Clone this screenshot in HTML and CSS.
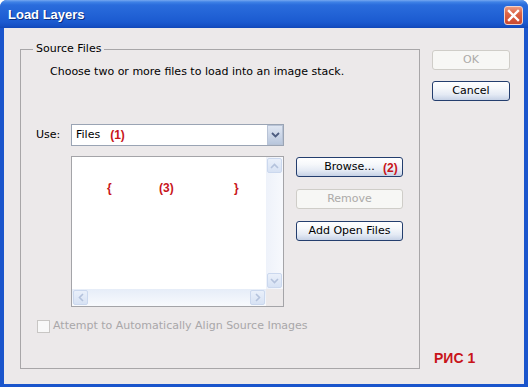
FILE: index.html
```html
<!DOCTYPE html>
<html>
<head>
<meta charset="utf-8">
<link rel="stylesheet" href="styles.css">
</head>
<body>
<div class="window">
  <div class="titlebar">
    <span class="title">Load Layers</span>
    <span class="close-btn">
      <svg width="13" height="13" viewBox="0 0 13 13"><path d="M2 2 L11 11 M11 2 L2 11" stroke="#fff" stroke-width="2.4" stroke-linecap="square"/></svg>
    </span>
  </div>
  <div class="client">
    <fieldset class="group">
      <legend class="group-title">Source Files</legend>
      <p class="hint">Choose two or more files to load into an image stack.</p>
      <div class="use-row">
        <span class="use-label">Use:</span>
        <div class="select">
          <span class="select-value">Files</span>
          <span class="mark mark-1">(1)</span>
          <span class="select-arrow">
            <svg width="9" height="6" viewBox="0 0 9 6"><path d="M1 1 L4.5 4.5 L8 1" fill="none" stroke="#4d5d80" stroke-width="1.8"/></svg>
          </span>
        </div>
      </div>
      <div class="files-row">
        <div class="listbox">
          <div class="list-top">
            <div class="list-content">
              <span class="mark brace-l">{</span>
              <span class="mark mark-3">(3)</span>
              <span class="mark brace-r">}</span>
            </div>
            <div class="vscroll">
              <span class="sbtn">
                <svg width="9" height="6" viewBox="0 0 9 6"><path d="M1 5 L4.5 1.5 L8 5" fill="none" stroke="#b4c2dc" stroke-width="1.6"/></svg>
              </span>
              <span class="vtrack"></span>
              <span class="sbtn">
                <svg width="9" height="6" viewBox="0 0 9 6"><path d="M1 1 L4.5 4.5 L8 1" fill="none" stroke="#b4c2dc" stroke-width="1.6"/></svg>
              </span>
            </div>
          </div>
          <div class="list-bottom">
            <div class="hscroll">
              <span class="sbtn">
                <svg width="6" height="9" viewBox="0 0 6 9"><path d="M5 1 L1.5 4.5 L5 8" fill="none" stroke="#b4c2dc" stroke-width="1.6"/></svg>
              </span>
              <span class="htrack"></span>
              <span class="sbtn">
                <svg width="6" height="9" viewBox="0 0 6 9"><path d="M1 1 L4.5 4.5 L1 8" fill="none" stroke="#b4c2dc" stroke-width="1.6"/></svg>
              </span>
            </div>
            <span class="corner"></span>
          </div>
        </div>
        <div class="side-buttons">
          <span class="btn btn-browse">Browse...<span class="mark mark-2">(2)</span></span>
          <span class="btn btn-disabled">Remove</span>
          <span class="btn">Add Open Files</span>
        </div>
      </div>
      <div class="check-row">
        <span class="checkbox"></span>
        <span class="check-label">Attempt to Automatically Align Source Images</span>
      </div>
    </fieldset>
    <div class="dialog-buttons">
      <span class="btn btn-disabled btn-dialog">OK</span>
      <span class="btn btn-dialog">Cancel</span>
      <span class="caption">РИС 1</span>
    </div>
  </div>
</div>
</body>
</html>
```

FILE: styles.css
```css
html, body {
  margin: 0;
  padding: 0;
  background: #ffffff;
}

body {
  font-family: "DejaVu Sans", Tahoma, sans-serif;
  font-size: 11px;
  color: #000;
}

.window {
  width: 528px;
  height: 387px;
  box-sizing: border-box;
  display: flex;
  flex-direction: column;
  background: #1a55cc;
  border-radius: 7px 7px 0 0;
  overflow: hidden;
}

.titlebar {
  height: 28px;
  flex: none;
  display: flex;
  align-items: center;
  justify-content: space-between;
  padding: 0 5px 0 8px;
  background: linear-gradient(to bottom, #76a8f0 0px, #3f82e6 2px, #2a6cdc 5px, #2263d6 14px, #1b5ad0 22px, #1550c4 26px, #1147b8 28px);
}

.title {
  font-family: "Liberation Sans", Arial, sans-serif;
  font-weight: bold;
  font-size: 13px;
  color: #fff;
  text-shadow: 1px 1px 0 #0a2e80;
  letter-spacing: 0;
}

.close-btn {
  width: 19px;
  height: 19px;
  box-sizing: border-box;
  border: 1px solid #f3d2c8;
  border-radius: 3px;
  background: linear-gradient(to bottom, #ec9a82 0%, #dd6748 35%, #d4553a 70%, #c94a30 100%);
  display: flex;
  align-items: center;
  justify-content: center;
  margin-top: 2px;
}

.client {
  flex: 1;
  margin: 0 4px 3px 4px;
  background: #ece9ea;
  display: flex;
  align-items: flex-start;
  padding: 0 14px 0 16px;
  gap: 12px;
}

.group {
  margin: 14px 0 0 0;
  padding: 0;
  width: 401px;
  height: 327px;
  box-sizing: border-box;
  border: 1px solid #a8a6a8;
  display: flex;
  flex-direction: column;
  align-items: flex-start;
}

.group-title {
  margin-left: 12px;
  padding: 0 3px;
  line-height: 14px;
}

.hint {
  margin: 9px 0 0 29px;
  line-height: 14px;
}

.use-row {
  margin: 45px 0 0 15px;
  display: flex;
  align-items: center;
}

.use-label {
  width: 35px;
  line-height: 14px;
}

.select {
  width: 213px;
  height: 22px;
  box-sizing: border-box;
  border: 1px solid #9aa4b4;
  background: #fff;
  display: flex;
  align-items: center;
  padding-left: 4px;
}

.select-value {
  line-height: 14px;
}

.mark {
  font-family: "Liberation Sans", Arial, sans-serif;
  font-weight: bold;
  font-size: 12px;
  color: #c8141a;
  line-height: 14px;
}

.mark-1 {
  margin-left: 10px;
}

.select-arrow {
  margin-left: auto;
  width: 16px;
  height: 20px;
  box-sizing: border-box;
  border: 1px solid #b8c3d6;
  background: linear-gradient(to bottom, #dfe6f2 0%, #c9d4e6 60%, #b8c6dc 100%);
  display: flex;
  align-items: center;
  justify-content: center;
}

.files-row {
  margin: 10px 0 0 50px;
  display: flex;
  align-items: flex-start;
  gap: 12px;
}

.listbox {
  width: 213px;
  height: 151px;
  box-sizing: border-box;
  border: 1px solid #a4a4a8;
  background: #fff;
  display: flex;
  flex-direction: column;
}

.list-top {
  flex: 1;
  display: flex;
}

.list-content {
  flex: 1;
  position: relative;
}

.list-content .mark {
  position: absolute;
  top: 24px;
}

.brace-l { left: 35px; }
.mark-3 { left: 87px; }
.brace-r { left: 162px; }

.vscroll {
  width: 17px;
  display: flex;
  flex-direction: column;
  background: linear-gradient(to right, #eef2fa, #f7f9fd);
}

.vtrack {
  flex: 1;
}

.sbtn {
  width: 15px;
  height: 15px;
  margin: 0 1px;
  box-sizing: border-box;
  border: 1px solid #cbd8ee;
  border-radius: 2px;
  background: linear-gradient(to bottom, #eaf0fa, #d7e2f4);
  display: flex;
  align-items: center;
  justify-content: center;
  flex: none;
}

.vscroll .sbtn {
  margin: 1px 1px;
}

.list-bottom {
  height: 17px;
  display: flex;
}

.hscroll {
  flex: 1;
  display: flex;
  align-items: center;
  background: linear-gradient(to bottom, #e6edf8, #f8fafd);
}

.hscroll .sbtn {
  margin: 0 1px;
}

.htrack {
  flex: 1;
}

.corner {
  width: 17px;
  background: #ece9ea;
}

.side-buttons {
  margin-top: 1px;
  display: flex;
  flex-direction: column;
  gap: 12px;
}

.btn {
  width: 107px;
  height: 20px;
  box-sizing: border-box;
  border: 1px solid #243e6e;
  border-radius: 3px;
  background: linear-gradient(to bottom, #ffffff 0%, #f6f8fb 35%, #e4eaf4 70%, #c6d2e6 100%);
  display: flex;
  align-items: center;
  justify-content: center;
  line-height: 14px;
  position: relative;
}

.btn-disabled {
  border-color: #cfcdc8;
  background: #f7f7f5;
  color: #acaaa8;
}

.mark-2 {
  position: absolute;
  left: 86px;
  top: 3px;
}

.check-row {
  margin: 12px 0 0 16px;
  display: flex;
  align-items: center;
  gap: 3px;
}

.checkbox {
  width: 13px;
  height: 13px;
  box-sizing: border-box;
  border: 1px solid #c8c6c4;
  background: #f8f8f8;
}

.check-label {
  color: #a9a7a9;
  line-height: 14px;
}

.dialog-buttons {
  margin-top: 22px;
  height: 318px;
  display: flex;
  flex-direction: column;
  gap: 11px;
}

.btn-dialog {
  width: 78px;
}

.caption {
  margin-top: auto;
  margin-left: 2px;
  margin-bottom: 2px;
  font-family: "Liberation Sans", Arial, sans-serif;
  font-weight: bold;
  font-size: 14px;
  color: #c8141a;
}
```
